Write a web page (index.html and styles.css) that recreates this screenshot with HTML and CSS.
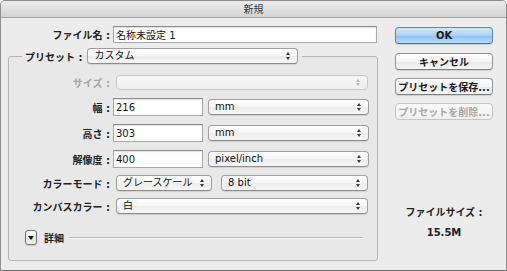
FILE: index.html
```html
<!DOCTYPE html>
<html lang="ja">
    <head>
        <meta charset="utf-8" />
        <title>新規</title>
        <link rel="stylesheet" href="styles.css">
    </head>
    <body>
        <div class="dialog">
            <div class="titlebar">新規</div>
            <div class="content">
                <div class="main">
                    <div class="name-row">
                        <label class="label" for="fname">ファイル名 :</label>
                        <input class="field name-field" id="fname" type="text" value="名称未設定 1">
                    </div>

                    <fieldset class="group">
                        <legend class="preset">
                            <span class="label">プリセット :</span>
                            <div class="popup preset-popup">カスタム</div>
                        </legend>

                        <div class="row row-size">
                            <span class="label disabled">サイズ :</span>
                            <div class="popup popup-full is-disabled"></div>
                        </div>
                        <div class="row row-field">
                            <label class="label" for="w">幅 :</label>
                            <input class="field num-field" id="w" type="text" value="216">
                            <div class="popup popup-unit">mm</div>
                        </div>
                        <div class="row row-field">
                            <label class="label" for="h">高さ :</label>
                            <input class="field num-field" id="h" type="text" value="303">
                            <div class="popup popup-unit">mm</div>
                        </div>
                        <div class="row row-field">
                            <label class="label" for="res">解像度 :</label>
                            <input class="field num-field" id="res" type="text" value="400">
                            <div class="popup popup-unit">pixel/inch</div>
                        </div>
                        <div class="row row-mode">
                            <span class="label">カラーモード :</span>
                            <div class="popup popup-mode">グレースケール</div>
                            <div class="popup popup-bits">8 bit</div>
                        </div>
                        <div class="row row-canvas">
                            <span class="label">カンバスカラー :</span>
                            <div class="popup popup-full">白</div>
                        </div>

                        <div class="row row-details">
                            <span class="disclosure"></span>
                            <span class="details-text">詳細</span>
                            <span class="details-line"></span>
                        </div>
                    </fieldset>
                </div>

                <div class="side">
                    <button class="btn btn-default">OK</button>
                    <button class="btn">キャンセル</button>
                    <button class="btn">プリセットを保存...</button>
                    <button class="btn" disabled>プリセットを削除...</button>

                    <div class="info">
                        <div class="info-label">ファイルサイズ :</div>
                        <div class="info-value">15.5M</div>
                    </div>
                </div>
            </div>
        </div>
    </body>
</html>
```

FILE: styles.css
```css
* {
    margin: 0;
    padding: 0;
    box-sizing: border-box;
}

body {
    background: #fff;
    font-family: "DejaVu Sans", "Noto Sans CJK JP", sans-serif;
    font-size: 10px;
    color: #1c1c1c;
}

.dialog {
    width: 507px;
    height: 271px;
    display: flex;
    flex-direction: column;
    background: #ececec;
    border: 1px solid #8e8e8e;
    border-bottom-color: #6e6e6e;
    border-radius: 5px 5px 0 0;
    overflow: hidden;
}

.titlebar {
    flex: none;
    height: 17px;
    line-height: 18px;
    text-align: center;
    color: #3a3a3a;
    background: linear-gradient(#ececec, #d3d3d3);
    border-bottom: 1px solid #a2a2a2;
}

.content {
    display: flex;
    padding: 8px 0 0 7px;
}

.main {
    width: 370px;
}

.label {
    flex: none;
    font-weight: 600;
    text-align: right;
    white-space: nowrap;
    color: #222;
}

.label.disabled {
    color: #a6a6a6;
}

/* text fields */
.field {
    height: 18px;
    padding: 0 2px;
    font: inherit;
    color: #111;
    background: #fff;
    border: 1px solid #a8a8a8;
    border-top-color: #8a8a8a;
    box-shadow: inset 0 1px 1px rgba(0, 0, 0, 0.12);
    outline: none;
}

.name-row {
    display: flex;
    align-items: center;
    height: 17px;
}

.name-row .label {
    width: 102px;
}

.name-field {
    width: 264px;
    height: 17px;
    margin-left: 3px;
}

/* group box */
.group {
    margin-top: 5px;
    padding: 6px 0 11px;
    border: 1px solid #b6b6b6;
    border-radius: 3px;
    background: #e8e8e8;
}

.preset {
    display: flex;
    align-items: center;
    margin-left: 13px;
    padding: 0 4px 0 3px;
}

.preset-popup {
    width: 211px;
    margin-left: 5px;
}

.row {
    display: flex;
    align-items: center;
}

.row .label {
    width: 101px;
}

.row-size { height: 24px; }
.row-field { height: 26px; }
.row-mode { height: 22px; }
.row-canvas { height: 24px; }

.num-field {
    width: 90px;
    margin-left: 3px;
}

/* popup buttons */
.popup {
    position: relative;
    height: 16px;
    padding: 0 16px 0 6px;
    line-height: 14px;
    white-space: nowrap;
    color: #111;
    background: linear-gradient(#ffffff, #f6f6f6 50%, #ececec 51%, #f7f7f7);
    border: 1px solid #a0a0a0;
    border-bottom-color: #8c8c8c;
    border-radius: 4px;
    box-shadow: 0 1px 1px rgba(0, 0, 0, 0.1);
}

.popup::before,
.popup::after {
    content: '';
    position: absolute;
    right: 7px;
    border-left: 2.5px solid transparent;
    border-right: 2.5px solid transparent;
}

.popup::before {
    top: 3px;
    border-bottom: 3px solid #3a3a3a;
}

.popup::after {
    bottom: 3px;
    border-top: 3px solid #3a3a3a;
}

.popup.is-disabled {
    height: 15px;
    border-color: #c9c9c9;
    background: linear-gradient(#f7f7f7, #efefef);
    box-shadow: none;
}

.popup.is-disabled::before { border-bottom-color: #b8b8b8; }
.popup.is-disabled::after { border-top-color: #b8b8b8; }

.popup-full {
    width: 252px;
    margin-left: 6px;
}

.popup-unit {
    width: 161px;
    margin-left: 5px;
}

.popup-mode {
    width: 96px;
    margin-left: 6px;
}

.popup-bits {
    width: 147px;
    margin-left: 9px;
}

/* details */
.row-details {
    height: 23px;
    margin-top: 8px;
}

.disclosure {
    position: relative;
    width: 12px;
    height: 15px;
    margin-left: 16px;
    border: 1px solid #747474;
    border-radius: 3px;
    background: linear-gradient(#ffffff, #ededed 50%, #e2e2e2 51%, #f2f2f2);
    box-shadow: 0 1px 1px rgba(0, 0, 0, 0.15);
}

.disclosure::after {
    content: '';
    position: absolute;
    left: 2px;
    top: 5px;
    border-left: 3.5px solid transparent;
    border-right: 3.5px solid transparent;
    border-top: 4px solid #111;
}

.details-text {
    margin-left: 7px;
    font-weight: 600;
    color: #222;
}

.details-line {
    flex: 1;
    margin: 0 14px 0 5px;
    border-top: 1px solid #b9b9b9;
    border-bottom: 1px solid #f6f6f6;
}

/* right column */
.side {
    width: 98px;
    margin-left: 17px;
    padding-top: 1px;
    display: flex;
    flex-direction: column;
    gap: 8px;
}

.btn {
    height: 17px;
    padding: 0;
    font: inherit;
    font-weight: 600;
    white-space: nowrap;
    color: #1a1a1a;
    background: linear-gradient(#ffffff, #f4f4f4 50%, #e9e9e9 51%, #f6f6f6);
    border: 1px solid #949494;
    border-bottom-color: #7e7e7e;
    border-radius: 4px;
    box-shadow: 0 1px 1px rgba(0, 0, 0, 0.12);
}

.btn-default {
    margin-bottom: 1px;
    font-weight: bold;
    background: linear-gradient(#d4e8fc, #a9d0f6 50%, #8fc0f2 51%, #b8dcfb);
    border-color: #5f83b6;
    border-bottom-color: #4b6d9e;
}

.btn:disabled {
    color: #a9a9a9;
    border-color: #c6c6c6;
    background: linear-gradient(#fafafa, #f0f0f0);
    box-shadow: none;
}

.info {
    margin-top: 78px;
    text-align: center;
    font-weight: 600;
    color: #222;
}

.info-label {
    line-height: 14px;
}

.info-value {
    margin-top: 6px;
    line-height: 14px;
}
```
